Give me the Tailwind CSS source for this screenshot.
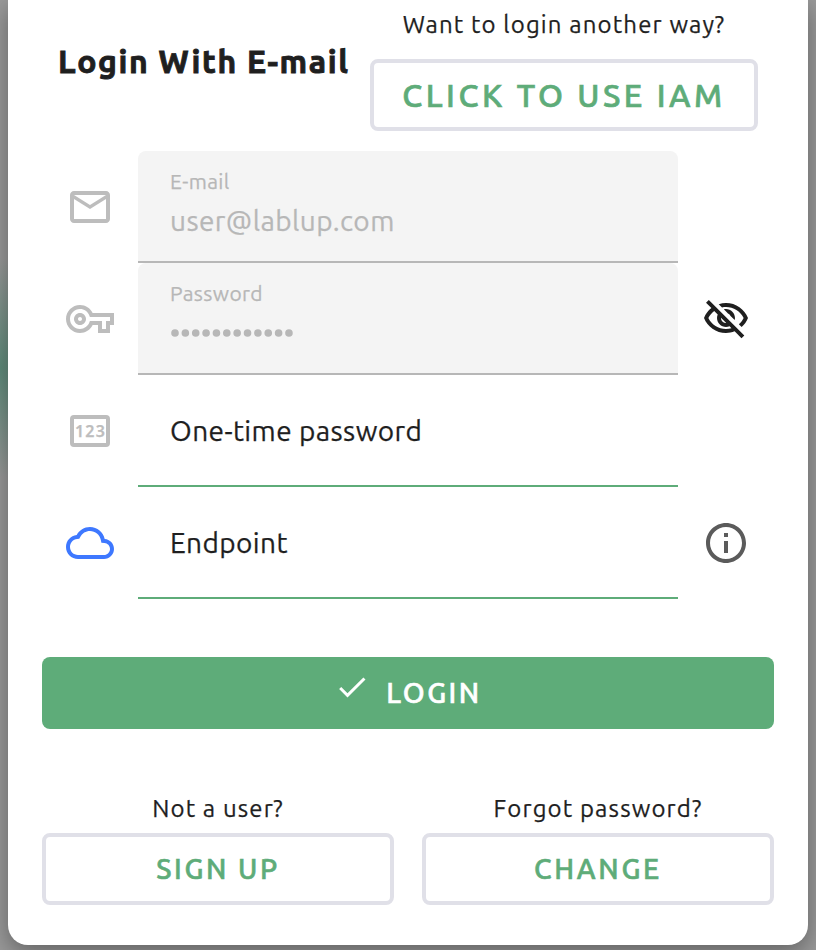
<!DOCTYPE html>
<html lang="en">
<head>
<meta charset="utf-8">
<title>Login</title>
<script src="https://cdn.jsdelivr.net/npm/@tailwindcss/browser@4"></script>
</head>
<body class="h-[950px] overflow-hidden bg-[#9a9a9a] bg-[radial-gradient(ellipse_60px_110px_at_0px_368px,#5f8c7b,transparent)] font-['Ubuntu','Noto_Sans',sans-serif] text-[#1f1f1f] [-webkit-text-stroke:0.25px]">
<div class="h-[950px] px-2">
<main class="h-[945px] rounded-b-[20px] bg-white shadow-[0_8px_24px_rgba(0,0,0,0.36)]">
  <header class="flex h-[151px] items-start justify-between pl-[50px] pr-[50px]">
    <h1 class="mt-[41px] whitespace-nowrap text-[32px] font-bold leading-10 tracking-[1.6px] [-webkit-text-stroke:0.9px]">Login With E-mail</h1>
    <div class="flex w-[388px] flex-col items-center pt-[9px]">
      <p class="whitespace-nowrap text-[24px] leading-8 tracking-[1.13px]">Want to login another way?</p>
      <button class="mt-[18px] flex h-[72px] w-full items-center justify-center whitespace-nowrap rounded-lg border-4 border-[#e0e0e8] text-[32px] font-medium tracking-[3.5px] text-[#5eac79] [-webkit-text-stroke:0.7px]">CLICK TO USE IAM</button>
    </div>
  </header>

  <section class="grid grid-cols-[48px_540px_48px] gap-x-6 pl-[58px]">
    <svg class="mt-8 size-12 text-[#bdbdbd]" viewBox="0 0 24 24" fill="currentColor"><path d="M22 6c0-1.1-.9-2-2-2H4c-1.1 0-2 .9-2 2v12c0 1.1.9 2 2 2h16c1.1 0 2-.9 2-2V6zm-2 0l-8 5-8-5h16zm0 12H4V8l8 5 8-5v10z"/></svg>
    <div class="h-28 rounded-t-lg border-b-2 border-[#b7b7b7] bg-[#f4f4f4] pl-8 pt-[18px] text-[#b7b7b7]">
      <div class="text-[21px] leading-6 tracking-[0.4px]">E-mail</div>
      <div class="mt-[10px] text-[28px] leading-9 tracking-[0.4px]">user@lablup.com</div>
    </div>
    <span></span>

    <svg class="mt-8 size-12 text-[#bdbdbd]" viewBox="0 0 24 24" fill="currentColor"><path d="M22 19h-6v-4h-2.68c-1.14 2.42-3.6 4-6.32 4-3.86 0-7-3.14-7-7s3.14-7 7-7c2.72 0 5.17 1.58 6.32 4H24v6h-2v4zm-4-2h2v-4h2v-2H11.94l-.23-.67C11.01 8.34 9.11 7 7 7c-2.76 0-5 2.24-5 5s2.24 5 5 5c2.11 0 4.01-1.34 4.71-3.33l.23-.67H18v4zM7 15c-1.65 0-3-1.35-3-3s1.35-3 3-3 3 1.35 3 3-1.35 3-3 3zm0-4c-.55 0-1 .45-1 1s.45 1 1 1 1-.45 1-1-.45-1-1-1z"/></svg>
    <div class="h-28 rounded-t-lg border-b-2 border-[#b7b7b7] bg-[#f4f4f4] pl-8 pt-[18px] text-[#b7b7b7]">
      <div class="text-[21px] leading-6 tracking-[0.35px]">Password</div>
      <svg class="mt-[22px] h-3 w-[130px]" viewBox="0 0 130 12"><path d="M5 6H119.1" fill="none" stroke="currentColor" stroke-width="7.6" stroke-linecap="round" stroke-dasharray="0 10.36"/></svg>
    </div>
    <svg class="mt-8 size-12" viewBox="0 0 24 24" fill="currentColor"><path d="M12 6c3.79 0 7.17 2.13 8.82 5.5-.59 1.22-1.42 2.27-2.41 3.12l1.41 1.41c1.39-1.23 2.49-2.77 3.18-4.53C21.27 7.11 17 4 12 4c-1.27 0-2.49.2-3.64.57l1.65 1.65C10.66 6.09 11.32 6 12 6zm-1.07 1.14L13 9.21c.57.25 1.03.71 1.28 1.28l2.07 2.07c.08-.34.14-.7.14-1.07C16.5 9.01 14.48 7 12 7c-.37 0-.72.05-1.07.14zM2.01 3.87l2.68 2.68C3.06 7.83 1.77 9.53 1 11.5 2.73 15.89 7 19 12 19c1.52 0 2.98-.29 4.32-.82l3.42 3.42 1.41-1.41L3.42 2.45 2.01 3.87zm7.5 7.5l2.61 2.61c-.04.01-.08.02-.12.02-1.38 0-2.5-1.12-2.5-2.5 0-.05.01-.08.01-.13zm-3.4-3.4l1.75 1.75c-.23.55-.36 1.15-.36 1.78 0 2.48 2.02 4.5 4.5 4.5.63 0 1.23-.13 1.77-.36l.98.98c-.88.24-1.8.38-2.75.38-3.79 0-7.17-2.13-8.82-5.5.7-1.43 1.72-2.61 2.93-3.53z"/></svg>

    <div class="ml-1 mt-10 flex h-8 w-10 items-center justify-center rounded border-4 border-[#bdbdbd] font-['Noto_Sans',sans-serif] text-[16px] font-semibold leading-none tracking-[1.2px] text-[#bdbdbd]"><span class="-mr-px">123</span></div>
    <div class="flex h-28 items-center border-b-2 border-[#5eac79] pl-8 pt-0.5 text-[28px] leading-9 tracking-[0.42px]"><span>One-time password</span></div>
    <span></span>

    <svg class="mt-8 size-12 text-[#3e78ff]" viewBox="0 0 24 24" fill="currentColor"><path d="M19.35 10.04C18.67 6.59 15.64 4 12 4 9.11 4 6.6 5.64 5.35 8.04 2.34 8.36 0 10.91 0 14c0 3.31 2.69 6 6 6h13c2.76 0 5-2.24 5-5 0-2.64-2.05-4.78-4.65-4.96zM19 18H6c-2.21 0-4-1.79-4-4 0-2.05 1.53-3.76 3.56-3.97l1.07-.11.5-.95C8.08 7.14 9.94 6 12 6c2.62 0 4.88 1.86 5.39 4.43l.3 1.5 1.53.11c1.56.1 2.78 1.41 2.78 2.96 0 1.65-1.35 3-3 3z"/></svg>
    <div class="flex h-28 items-center border-b-2 border-[#5eac79] pl-8 pt-0.5 text-[28px] leading-9 tracking-[0.4px]"><span>Endpoint</span></div>
    <svg class="mt-8 size-12 text-[#5b5b5b]" viewBox="0 0 24 24" fill="currentColor"><path d="M11 7h2v2h-2zm0 4h2v6h-2zm1-9C6.48 2 2 6.48 2 12s4.48 10 10 10 10-4.48 10-10S17.52 2 12 2zm0 18c-4.41 0-8-3.59-8-8s3.59-8 8-8 8 3.59 8 8-3.59 8-8 8z"/></svg>
  </section>

  <div class="mt-[58px] px-[34px]">
    <button class="flex h-[72px] w-full items-center justify-center rounded-lg bg-[#5eac79] text-[28px] font-medium tracking-[2.5px] text-white [-webkit-text-stroke:0.6px]">
      <svg class="-mt-3 mr-4 size-9" viewBox="0 0 24 24" fill="currentColor"><path d="M9 16.17L4.83 12l-1.42 1.41L9 19 21 7l-1.41-1.41z"/></svg>
      <span>LOGIN</span>
    </button>
  </div>

  <footer class="mt-16 grid grid-cols-2 gap-x-7 px-[34px] text-center">
    <div>
      <p class="text-[24px] leading-8 tracking-[1.13px]">Not a user?</p>
      <button class="mt-2 flex h-[72px] w-full items-center justify-center rounded-lg border-4 border-[#e0e0e8] text-[28px] font-medium tracking-[2.6px] text-[#5eac79] [-webkit-text-stroke:0.6px]">SIGN UP</button>
    </div>
    <div>
      <p class="text-[24px] leading-8 tracking-[1.13px]">Forgot password?</p>
      <button class="mt-2 flex h-[72px] w-full items-center justify-center rounded-lg border-4 border-[#e0e0e8] text-[28px] font-medium tracking-[2.7px] text-[#5eac79] [-webkit-text-stroke:0.6px]">CHANGE</button>
    </div>
  </footer>
</main>
</div>
</body>
</html>
